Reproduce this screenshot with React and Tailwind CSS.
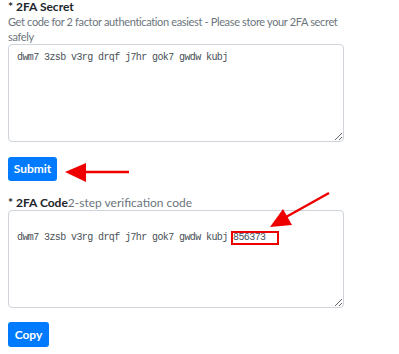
export default function App() {
  const secret = "dwm7 3zsb v3rg drqf j7hr gok7 gwdw kubj";

  return (
    <div className="relative w-[399px] h-[354px] bg-white overflow-hidden font-['Lato','Open_Sans',sans-serif]">
      <div className="px-2 w-[360px]">
        {/* 2FA secret */}
        <div className="text-[12px] leading-[14px] font-bold text-[#212529]">* 2FA Secret</div>
        <p className="w-[344px] text-[11px] leading-[15px] tracking-[-0.35px] text-[#6c757d]">
          Get code for 2 factor authentication easiest - Please store your 2FA secret safely
        </p>
        <textarea
          readOnly
          defaultValue={secret}
          className="block w-[336px] h-[98px] border border-[#ced4da] rounded-[4px] px-[8px] py-[6px] text-[10px] leading-[14px] tracking-[-0.6px] text-[#495057] font-['Liberation_Mono',monospace] outline-none"
        />
        <button className="mt-[15px] h-[24px] w-[49px] rounded-[3px] bg-[#007bff] text-white text-[12px] font-bold">
          Submit
        </button>

        {/* 2FA code */}
        <div className="mt-[15px] text-[12px] leading-[14px] text-[#6c757d]">
          <span className="font-bold text-[#212529]">* 2FA Code</span>2-step verification code
        </div>
        <textarea
          readOnly
          defaultValue={"\n" + secret + " 856373"}
          className="block w-[336px] h-[98px] border border-[#ced4da] rounded-[4px] px-[8px] py-[6px] text-[10px] leading-[14px] tracking-[-0.6px] text-[#495057] font-['Liberation_Mono',monospace] outline-none"
        />
        <button className="mt-[14px] h-[25px] w-[41px] rounded-[3px] bg-[#007bff] text-white text-[12px] font-bold">
          Copy
        </button>
      </div>

      {/* annotations */}
      <div className="absolute left-[231px] top-[231px] w-[48px] h-[14px] border-2 border-[#ee0000]" />
      <svg className="absolute inset-0 pointer-events-none" width="399" height="354">
        <line x1="84" y1="172" x2="129" y2="172" stroke="#ee0000" strokeWidth="2.5" />
        <polygon points="65,172 86,163 86,182" fill="#ee0000" />
        <line x1="329" y1="193" x2="286" y2="217" stroke="#ee0000" strokeWidth="2.5" />
        <polygon points="270,227 283,209 292,225" fill="#ee0000" />
      </svg>
    </div>
  );
}
